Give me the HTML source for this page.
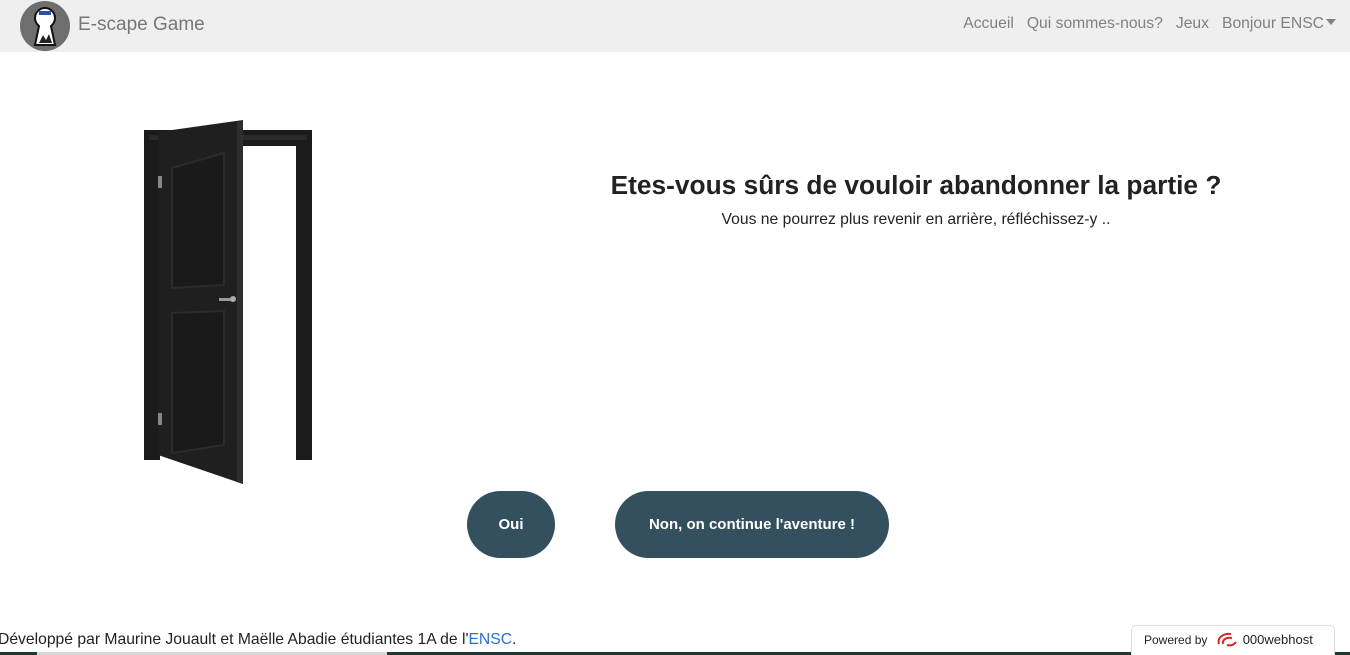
<!DOCTYPE html>
<html><head><meta charset="utf-8"><style>
*{margin:0;padding:0;box-sizing:border-box}
body{width:1350px;height:655px;overflow:hidden;background:#fff;font-family:"Liberation Sans",sans-serif;position:relative;color:#212529}
.nav{position:absolute;left:0;top:0;width:1350px;height:52px;background:#efefef}
.logo{position:absolute;left:20px;top:1px;width:50px;height:50px;border-radius:50%;background:#6e6e6e}
.brand{position:absolute;left:78px;top:14px;font-size:19px;color:#777}
.links{position:absolute;right:14px;top:15px;font-size:15.7px;color:#808080;white-space:nowrap}
.links span{margin-left:13px}
.tri{display:inline-block;width:0;height:0;border-left:5px solid transparent;border-right:5px solid transparent;border-top:6px solid #808080;vertical-align:3px;margin-left:2px}
h1{position:absolute;left:0;width:1832px;text-align:center;top:170px;font-size:26.3px;font-weight:bold;color:#222}
.sub{position:absolute;left:0;width:1832px;text-align:center;top:211px;font-size:15.7px;color:#222}
.btn{position:absolute;top:491px;height:67px;background:#34505f;color:#fff;font-weight:bold;font-size:15px;border-radius:34px;display:flex;align-items:center;justify-content:center}
.foot{position:absolute;left:-2px;top:631px;font-size:15.7px;color:#222}
.foot a{color:#2a6fc8;text-decoration:none}
.pw{position:absolute;left:1131px;top:625px;width:204px;height:30px;border:1px solid #ddd;border-bottom:none;border-radius:5px 5px 0 0;background:#fff;font-size:12px;color:#222;padding:4px 0 0 12px}
.pw b{font-weight:normal;font-size:13px;margin-left:4px}
.bar{position:absolute;left:0;top:652px;width:1350px;height:3px;background:#1f3536}
.bar2{position:absolute;left:37px;top:652px;width:350px;height:3px;background:#d8d8d8}
</style></head><body>
<div class="nav">
 <div class="logo"><svg width="50" height="50"><path d="M25 7a10 10 0 0 0-6 18l-4 19h20l-4-19a10 10 0 0 0-6-18z" fill="#fff" stroke="#111" stroke-width="2"/><rect x="19" y="10" width="12" height="4" fill="#2a4fb0"/><path d="M19 42l4-8 3 5 3-6 3 9z" fill="#222"/></svg></div>
 <div class="brand">E-scape Game</div>
 <div class="links"><span>Accueil</span><span>Qui sommes-nous?</span><span>Jeux</span><span>Bonjour ENSC<i class="tri"></i></span></div>
</div>
<svg style="position:absolute;left:0;top:0" width="400" height="500">
 <path d="M144 130H312V460H296V146H160V460H144Z" fill="#1b1b1b"/>
 <path d="M149 135H307V140H149Z" fill="#2a2a2a"/>
 <path d="M158 132L243 120V484L158 455Z" fill="#1f1f1f"/>
 <path d="M237 122L243 120V484L237 482Z" fill="#2e2e2e"/>
 <path d="M172 168L224 153V285L172 288Z" fill="#1a1a1a" stroke="#2b2b2b" stroke-width="2"/>
 <path d="M172 313L224 311V445L172 453Z" fill="#1a1a1a" stroke="#2b2b2b" stroke-width="2"/>
 <rect x="219" y="298" width="14" height="3" fill="#999"/><circle cx="233" cy="299" r="3" fill="#aaa"/>
 <rect x="158" y="176" width="4" height="12" fill="#888"/><rect x="158" y="413" width="4" height="12" fill="#888"/>
</svg>
<h1>Etes-vous sûrs de vouloir abandonner la partie ?</h1>
<div class="sub">Vous ne pourrez plus revenir en arrière, réfléchissez-y ..</div>
<div class="btn" style="left:467px;width:88px">Oui</div>
<div class="btn" style="left:615px;width:274px">Non, on continue l'aventure !</div>
<div class="foot">Développé par Maurine Jouault et Maëlle Abadie étudiantes 1A de l'<a>ENSC</a>.</div>
<div class="bar"></div><div class="bar2"></div>
<div class="pw">Powered by <svg width="24" height="18" style="vertical-align:-4px;margin-left:4px"><path d="M4 14C2 8 8 3 16 4M8 14C7 10 11 7 17 8M12 15c3 1 7 0 9-3" fill="none" stroke="#e02424" stroke-width="2"/></svg><b>000webhost</b></div>
</body></html>
